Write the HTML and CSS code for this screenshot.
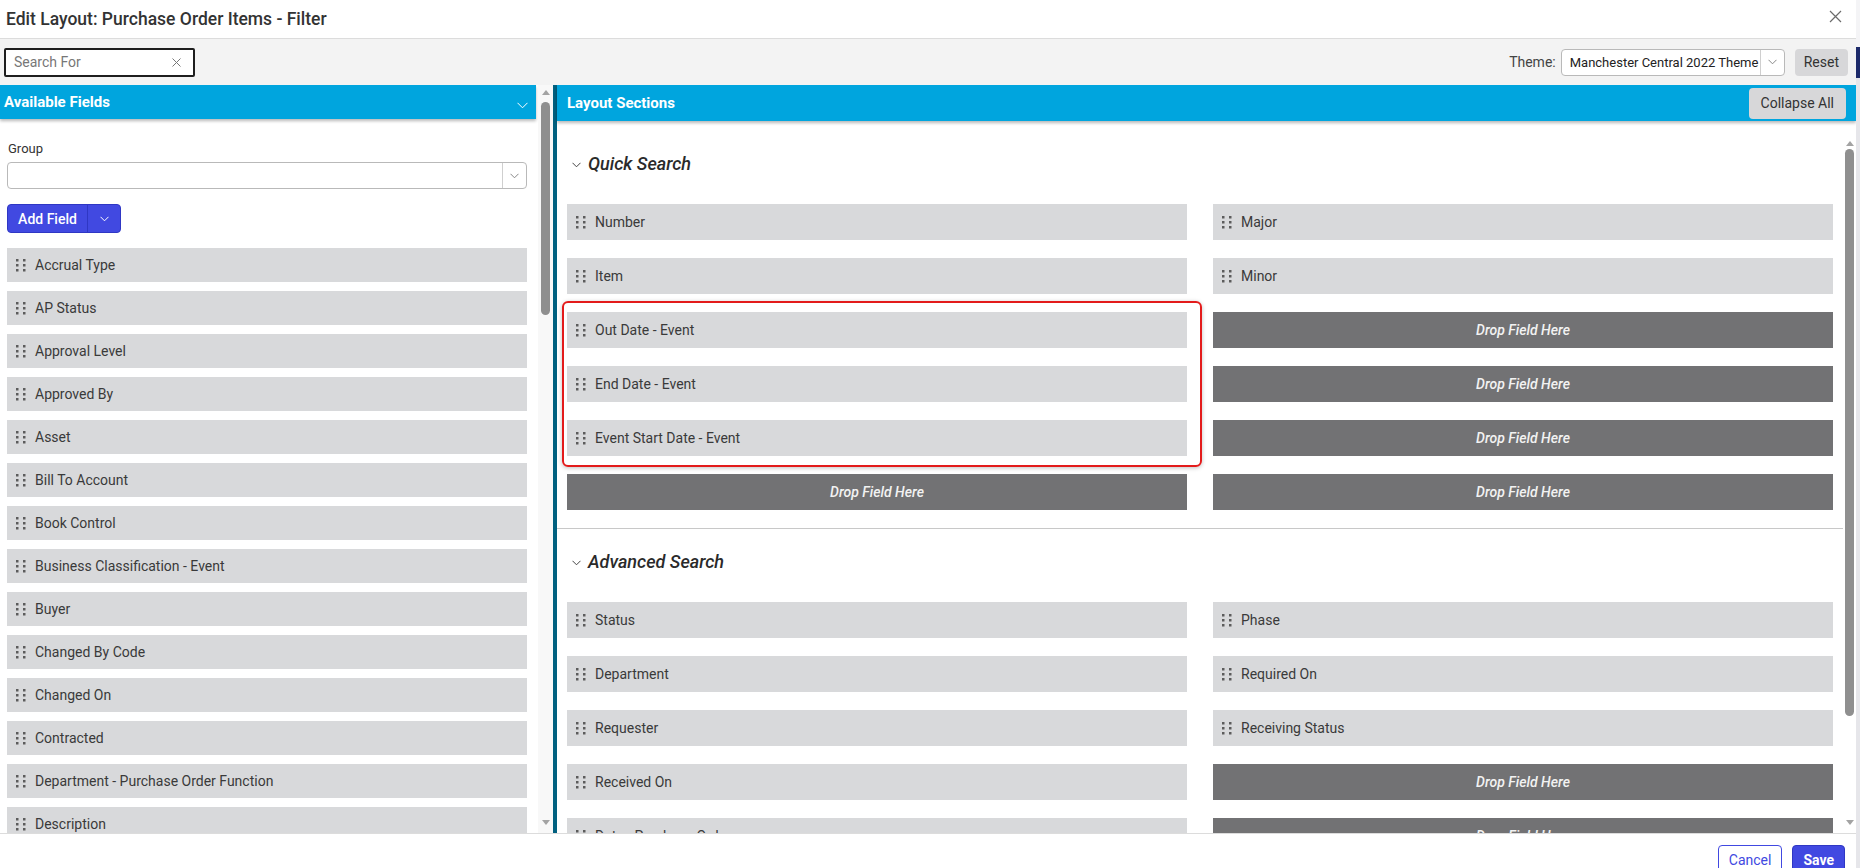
FILE: index.html
```html
<!DOCTYPE html>
<html lang="en">
<head>
    <meta charset="UTF-8">
    <meta name="viewport" content="width=device-width, initial-scale=1.0">
    <link rel="stylesheet" href="styles.css">
    <title>Edit Layout</title>
</head>
<body>
    <div class="modal">
        <header class="modal-head">
            <h1>Edit Layout: Purchase Order Items - Filter</h1>
            <button class="close-btn" title="Close">
                <svg width="13" height="13" viewBox="0 0 13 13"><path d="M1 1l11 11M12 1L1 12" stroke="#6b6b6b" stroke-width="1.2" fill="none"/></svg>
            </button>
        </header>

        <div class="toolbar">
            <div class="search-box">
                <span class="placeholder">Search For</span>
                <svg width="9" height="9" viewBox="0 0 9 9"><path d="M.5.5l8 8M8.5.5l-8 8" stroke="#777" stroke-width="1" fill="none"/></svg>
            </div>
            <div class="theme-picker">
                <label>Theme:</label>
                <div class="select theme-select">
                    <span class="select-value">Manchester Central 2022 Theme</span>
                    <span class="select-caret">
                        <svg width="9" height="6" viewBox="0 0 9 6"><path d="M.5.8l4 4 4-4" stroke="#888" stroke-width="1" fill="none"/></svg>
                    </span>
                </div>
                <button class="btn btn-gray">Reset</button>
            </div>
        </div>

        <div class="workspace">
            <!-- left: fields that can be dragged into the layout -->
            <aside class="fields-panel">
                <div class="fields-main">
                    <div class="panel-head fields-head">
                        <span>Available Fields</span>
                        <svg width="11" height="7" viewBox="0 0 11 7"><path d="M.5.8l5 5 5-5" stroke="#fff" stroke-width="1" fill="none"/></svg>
                    </div>
                    <div class="fields-body">
                        <label class="field-label">Group</label>
                        <div class="select group-select">
                            <span class="select-value"></span>
                            <span class="select-caret">
                                <svg width="9" height="6" viewBox="0 0 9 6"><path d="M.5.8l4 4 4-4" stroke="#888" stroke-width="1" fill="none"/></svg>
                            </span>
                        </div>
                        <div class="split-btn">
                            <span class="split-main">Add Field</span>
                            <span class="split-caret">
                                <svg width="9" height="6" viewBox="0 0 9 6"><path d="M.5.8l4 4 4-4" stroke="#fff" stroke-width="1" fill="none"/></svg>
                            </span>
                        </div>
                        <ul class="field-list">
                            <li class="field"><svg class="grip" viewBox="0 0 10 13"><path d="M0 0h2.5v2.5H0zM7 0h2.5v2.5H7zM0 5h2.5v2.5H0zM7 5h2.5v2.5H7zM0 10h2.5v2.5H0zM7 10h2.5v2.5H7z"/></svg>Accrual Type</li>
                            <li class="field"><svg class="grip" viewBox="0 0 10 13"><path d="M0 0h2.5v2.5H0zM7 0h2.5v2.5H7zM0 5h2.5v2.5H0zM7 5h2.5v2.5H7zM0 10h2.5v2.5H0zM7 10h2.5v2.5H7z"/></svg>AP Status</li>
                            <li class="field"><svg class="grip" viewBox="0 0 10 13"><path d="M0 0h2.5v2.5H0zM7 0h2.5v2.5H7zM0 5h2.5v2.5H0zM7 5h2.5v2.5H7zM0 10h2.5v2.5H0zM7 10h2.5v2.5H7z"/></svg>Approval Level</li>
                            <li class="field"><svg class="grip" viewBox="0 0 10 13"><path d="M0 0h2.5v2.5H0zM7 0h2.5v2.5H7zM0 5h2.5v2.5H0zM7 5h2.5v2.5H7zM0 10h2.5v2.5H0zM7 10h2.5v2.5H7z"/></svg>Approved By</li>
                            <li class="field"><svg class="grip" viewBox="0 0 10 13"><path d="M0 0h2.5v2.5H0zM7 0h2.5v2.5H7zM0 5h2.5v2.5H0zM7 5h2.5v2.5H7zM0 10h2.5v2.5H0zM7 10h2.5v2.5H7z"/></svg>Asset</li>
                            <li class="field"><svg class="grip" viewBox="0 0 10 13"><path d="M0 0h2.5v2.5H0zM7 0h2.5v2.5H7zM0 5h2.5v2.5H0zM7 5h2.5v2.5H7zM0 10h2.5v2.5H0zM7 10h2.5v2.5H7z"/></svg>Bill To Account</li>
                            <li class="field"><svg class="grip" viewBox="0 0 10 13"><path d="M0 0h2.5v2.5H0zM7 0h2.5v2.5H7zM0 5h2.5v2.5H0zM7 5h2.5v2.5H7zM0 10h2.5v2.5H0zM7 10h2.5v2.5H7z"/></svg>Book Control</li>
                            <li class="field"><svg class="grip" viewBox="0 0 10 13"><path d="M0 0h2.5v2.5H0zM7 0h2.5v2.5H7zM0 5h2.5v2.5H0zM7 5h2.5v2.5H7zM0 10h2.5v2.5H0zM7 10h2.5v2.5H7z"/></svg>Business Classification - Event</li>
                            <li class="field"><svg class="grip" viewBox="0 0 10 13"><path d="M0 0h2.5v2.5H0zM7 0h2.5v2.5H7zM0 5h2.5v2.5H0zM7 5h2.5v2.5H7zM0 10h2.5v2.5H0zM7 10h2.5v2.5H7z"/></svg>Buyer</li>
                            <li class="field"><svg class="grip" viewBox="0 0 10 13"><path d="M0 0h2.5v2.5H0zM7 0h2.5v2.5H7zM0 5h2.5v2.5H0zM7 5h2.5v2.5H7zM0 10h2.5v2.5H0zM7 10h2.5v2.5H7z"/></svg>Changed By Code</li>
                            <li class="field"><svg class="grip" viewBox="0 0 10 13"><path d="M0 0h2.5v2.5H0zM7 0h2.5v2.5H7zM0 5h2.5v2.5H0zM7 5h2.5v2.5H7zM0 10h2.5v2.5H0zM7 10h2.5v2.5H7z"/></svg>Changed On</li>
                            <li class="field"><svg class="grip" viewBox="0 0 10 13"><path d="M0 0h2.5v2.5H0zM7 0h2.5v2.5H7zM0 5h2.5v2.5H0zM7 5h2.5v2.5H7zM0 10h2.5v2.5H0zM7 10h2.5v2.5H7z"/></svg>Contracted</li>
                            <li class="field"><svg class="grip" viewBox="0 0 10 13"><path d="M0 0h2.5v2.5H0zM7 0h2.5v2.5H7zM0 5h2.5v2.5H0zM7 5h2.5v2.5H7zM0 10h2.5v2.5H0zM7 10h2.5v2.5H7z"/></svg>Department - Purchase Order Function</li>
                            <li class="field"><svg class="grip" viewBox="0 0 10 13"><path d="M0 0h2.5v2.5H0zM7 0h2.5v2.5H7zM0 5h2.5v2.5H0zM7 5h2.5v2.5H7zM0 10h2.5v2.5H0zM7 10h2.5v2.5H7z"/></svg>Description</li>
                        </ul>
                    </div>
                </div>
                <div class="scrollbar fields-scroll">
                    <span class="arrow-up"></span>
                    <span class="thumb"></span>
                    <span class="arrow-down"></span>
                </div>
            </aside>

            <div class="divider"></div>

            <!-- right: the sections of the filter layout -->
            <section class="layout-panel">
                <div class="panel-head layout-head">
                    <span>Layout Sections</span>
                    <button class="btn btn-gray collapse-btn">Collapse All</button>
                </div>
                <div class="layout-body">
                    <div class="layout-main">
                        <div class="layout-section first">
                            <div class="section-title">
                                <svg width="9" height="6" viewBox="0 0 9 6"><path d="M.5.8l4 4 4-4" stroke="#444" stroke-width="1" fill="none"/></svg>
                                <span>Quick Search</span>
                            </div>
                            <div class="section-grid">
                                <div class="field"><svg class="grip" viewBox="0 0 10 13"><path d="M0 0h2.5v2.5H0zM7 0h2.5v2.5H7zM0 5h2.5v2.5H0zM7 5h2.5v2.5H7zM0 10h2.5v2.5H0zM7 10h2.5v2.5H7z"/></svg>Number</div>
                                <div class="field"><svg class="grip" viewBox="0 0 10 13"><path d="M0 0h2.5v2.5H0zM7 0h2.5v2.5H7zM0 5h2.5v2.5H0zM7 5h2.5v2.5H7zM0 10h2.5v2.5H0zM7 10h2.5v2.5H7z"/></svg>Major</div>
                                <div class="field"><svg class="grip" viewBox="0 0 10 13"><path d="M0 0h2.5v2.5H0zM7 0h2.5v2.5H7zM0 5h2.5v2.5H0zM7 5h2.5v2.5H7zM0 10h2.5v2.5H0zM7 10h2.5v2.5H7z"/></svg>Item</div>
                                <div class="field"><svg class="grip" viewBox="0 0 10 13"><path d="M0 0h2.5v2.5H0zM7 0h2.5v2.5H7zM0 5h2.5v2.5H0zM7 5h2.5v2.5H7zM0 10h2.5v2.5H0zM7 10h2.5v2.5H7z"/></svg>Minor</div>
                                <div class="field"><svg class="grip" viewBox="0 0 10 13"><path d="M0 0h2.5v2.5H0zM7 0h2.5v2.5H7zM0 5h2.5v2.5H0zM7 5h2.5v2.5H7zM0 10h2.5v2.5H0zM7 10h2.5v2.5H7z"/></svg>Out Date - Event</div>
                                <div class="drop">Drop Field Here</div>
                                <div class="field"><svg class="grip" viewBox="0 0 10 13"><path d="M0 0h2.5v2.5H0zM7 0h2.5v2.5H7zM0 5h2.5v2.5H0zM7 5h2.5v2.5H7zM0 10h2.5v2.5H0zM7 10h2.5v2.5H7z"/></svg>End Date - Event</div>
                                <div class="drop">Drop Field Here</div>
                                <div class="field"><svg class="grip" viewBox="0 0 10 13"><path d="M0 0h2.5v2.5H0zM7 0h2.5v2.5H7zM0 5h2.5v2.5H0zM7 5h2.5v2.5H7zM0 10h2.5v2.5H0zM7 10h2.5v2.5H7z"/></svg>Event Start Date - Event</div>
                                <div class="drop">Drop Field Here</div>
                                <div class="drop">Drop Field Here</div>
                                <div class="drop">Drop Field Here</div>
                                <div class="highlight"></div>
                            </div>
                        </div>

                        <div class="layout-section">
                            <div class="section-title">
                                <svg width="9" height="6" viewBox="0 0 9 6"><path d="M.5.8l4 4 4-4" stroke="#444" stroke-width="1" fill="none"/></svg>
                                <span>Advanced Search</span>
                            </div>
                            <div class="section-grid">
                                <div class="field"><svg class="grip" viewBox="0 0 10 13"><path d="M0 0h2.5v2.5H0zM7 0h2.5v2.5H7zM0 5h2.5v2.5H0zM7 5h2.5v2.5H7zM0 10h2.5v2.5H0zM7 10h2.5v2.5H7z"/></svg>Status</div>
                                <div class="field"><svg class="grip" viewBox="0 0 10 13"><path d="M0 0h2.5v2.5H0zM7 0h2.5v2.5H7zM0 5h2.5v2.5H0zM7 5h2.5v2.5H7zM0 10h2.5v2.5H0zM7 10h2.5v2.5H7z"/></svg>Phase</div>
                                <div class="field"><svg class="grip" viewBox="0 0 10 13"><path d="M0 0h2.5v2.5H0zM7 0h2.5v2.5H7zM0 5h2.5v2.5H0zM7 5h2.5v2.5H7zM0 10h2.5v2.5H0zM7 10h2.5v2.5H7z"/></svg>Department</div>
                                <div class="field"><svg class="grip" viewBox="0 0 10 13"><path d="M0 0h2.5v2.5H0zM7 0h2.5v2.5H7zM0 5h2.5v2.5H0zM7 5h2.5v2.5H7zM0 10h2.5v2.5H0zM7 10h2.5v2.5H7z"/></svg>Required On</div>
                                <div class="field"><svg class="grip" viewBox="0 0 10 13"><path d="M0 0h2.5v2.5H0zM7 0h2.5v2.5H7zM0 5h2.5v2.5H0zM7 5h2.5v2.5H7zM0 10h2.5v2.5H0zM7 10h2.5v2.5H7z"/></svg>Requester</div>
                                <div class="field"><svg class="grip" viewBox="0 0 10 13"><path d="M0 0h2.5v2.5H0zM7 0h2.5v2.5H7zM0 5h2.5v2.5H0zM7 5h2.5v2.5H7zM0 10h2.5v2.5H0zM7 10h2.5v2.5H7z"/></svg>Receiving Status</div>
                                <div class="field"><svg class="grip" viewBox="0 0 10 13"><path d="M0 0h2.5v2.5H0zM7 0h2.5v2.5H7zM0 5h2.5v2.5H0zM7 5h2.5v2.5H7zM0 10h2.5v2.5H0zM7 10h2.5v2.5H7z"/></svg>Received On</div>
                                <div class="drop">Drop Field Here</div>
                                <div class="field"><svg class="grip" viewBox="0 0 10 13"><path d="M0 0h2.5v2.5H0zM7 0h2.5v2.5H7zM0 5h2.5v2.5H0zM7 5h2.5v2.5H7zM0 10h2.5v2.5H0zM7 10h2.5v2.5H7z"/></svg>Date - Purchase Order</div>
                                <div class="drop">Drop Field Here</div>
                            </div>
                        </div>
                    </div>
                    <div class="scrollbar layout-scroll">
                        <span class="arrow-up"></span>
                        <span class="thumb"></span>
                        <span class="arrow-down"></span>
                    </div>
                </div>
            </section>
        </div>

        <footer class="modal-foot">
            <button class="btn btn-outline">Cancel</button>
            <button class="btn btn-primary">Save</button>
        </footer>
    </div>
</body>
</html>
```

FILE: styles.css
```css
body {
    margin: 0;
    height: 868px;
    overflow: hidden;
    /* page behind the dialog, seen along its right edge */
    background: linear-gradient(#f4f4f6 0 47px, #1d2a6a 47px 78px, #e6e6ea 78px);
    font-family: Roboto, "Liberation Sans", sans-serif;
    color: #333;
}

.modal {
    width: 1856px;
    height: 900px;
    background: #fff;
    display: flex;
    flex-direction: column;
}

/* title bar */
.modal-head {
    height: 38px;
    flex: none;
    border-bottom: 1px solid #dcdcdc;
    display: flex;
    align-items: center;
    justify-content: space-between;
    padding: 0 14px 0 6px;
}

.modal-head h1 {
    margin: 0;
    font-size: 17.5px;
    font-weight: 500;
    color: #333;
}

.close-btn {
    border: none;
    background: none;
    padding: 0;
    display: flex;
    margin-top: -6px;
}

/* search + theme row */
.toolbar {
    height: 46px;
    flex: none;
    background: #f3f3f3;
    display: flex;
    align-items: center;
    justify-content: space-between;
    padding: 0 8px 0 4px;
}

.search-box {
    width: 167px;
    height: 25px;
    border: 2px solid #1e1e1e;
    border-radius: 2px;
    background: #fff;
    display: flex;
    align-items: center;
    justify-content: space-between;
    padding: 0 12px 0 8px;
    box-sizing: content-box;
}

.search-box .placeholder {
    font-size: 14px;
    color: #777;
}

.theme-picker {
    display: flex;
    align-items: center;
}

.theme-picker label {
    font-size: 14px;
    color: #444;
    margin-right: 5px;
}

.select {
    display: flex;
    height: 25px;
    border: 1px solid #b9b9b9;
    border-radius: 4px;
    background: #fff;
}

.select-value {
    flex: 1;
    display: flex;
    align-items: center;
    padding-left: 8px;
    font-size: 13px;
    white-space: nowrap;
    overflow: hidden;
    color: #222;
}

.select-caret {
    width: 23px;
    flex: none;
    border-left: 1px solid #cfcfcf;
    display: flex;
    align-items: center;
    justify-content: center;
}

.theme-select {
    width: 222px;
    margin-right: 10px;
}

.btn {
    font-family: inherit;
    font-size: 14px;
    border-radius: 4px;
    cursor: pointer;
}

.btn-gray {
    height: 27px;
    padding: 0 9px;
    border: none;
    background: #d7d7d9;
    color: #333;
}

/* main area */
.workspace {
    height: 748px;
    flex: none;
    display: flex;
    overflow: hidden;
}

.fields-panel {
    width: 553px;
    flex: none;
    display: flex;
}

.fields-main {
    flex: 1;
    overflow: hidden;
}

.panel-head {
    background: #00a5de;
    color: #fff;
    font-size: 15px;
    font-weight: 700;
    display: flex;
    align-items: center;
    justify-content: space-between;
    box-shadow: 0 2px 3px rgba(0, 0, 0, 0.28);
    position: relative;
    z-index: 1;
}

.fields-head {
    height: 34px;
    padding: 0 8px 0 4px;
    margin-right: 2px;
}

.fields-head svg {
    margin-top: 6px;
}

.fields-body {
    padding: 22px 11px 0 7px;
}

.field-label {
    display: block;
    font-size: 13px;
    line-height: 16px;
    color: #333;
    margin-left: 1px;
}

.group-select {
    margin-top: 5px;
    height: 25px;
}

.split-btn {
    margin-top: 15px;
    width: 112px;
    height: 27px;
    display: flex;
    border: 1px solid #2f37c4;
    border-radius: 4px;
    background: #4149e1;
    color: #fff;
}

.split-main {
    width: 79px;
    display: flex;
    align-items: center;
    justify-content: center;
    font-size: 14px;
    font-weight: 500;
    border-right: 1px solid #2f37c4;
}

.split-caret {
    flex: 1;
    display: flex;
    align-items: center;
    justify-content: center;
}

.field-list {
    list-style: none;
    margin: 15px 0 0;
    padding: 0;
}

.field {
    height: 34px;
    margin-bottom: 9px;
    background: #d8d9db;
    display: flex;
    align-items: center;
    padding-left: 9px;
    font-size: 14px;
    color: #3a3a3a;
}

.grip {
    width: 10px;
    height: 13px;
    fill: #5c5c5c;
    margin-right: 9px;
    flex: none;
}

/* fake scrollbars drawn in the page chrome */
.scrollbar {
    flex: none;
    display: flex;
    flex-direction: column;
    align-items: center;
    background: #f8f8f8;
}

.fields-scroll {
    width: 15px;
    padding: 5px 0 8px;
}

.arrow-up,
.arrow-down {
    width: 0;
    height: 0;
    border-left: 4px solid transparent;
    border-right: 4px solid transparent;
}

.arrow-up {
    border-bottom: 5px solid #a3a3a3;
}

.arrow-down {
    border-top: 5px solid #a3a3a3;
    margin-top: auto;
}

.thumb {
    width: 9px;
    border-radius: 5px;
    background: #8f8f8f;
}

.fields-scroll .thumb {
    margin-top: 7px;
    height: 213px;
}

.divider {
    width: 4px;
    flex: none;
    background: #00607f;
}

.layout-panel {
    flex: 1;
    display: flex;
    flex-direction: column;
    min-width: 0;
}

.layout-head {
    height: 36px;
    flex: none;
    padding: 0 10px 0 10px;
}

.collapse-btn {
    height: 31px;
    padding: 0 12px;
    font-weight: 400;
}

.layout-body {
    flex: 1;
    display: flex;
    overflow: hidden;
}

.layout-main {
    flex: 1;
    overflow: hidden;
    padding: 0 10px;
}

.layout-scroll {
    width: 13px;
    background: #fff;
    padding: 20px 0 8px;
}

.layout-scroll .thumb {
    margin-top: 3px;
    height: 567px;
}

.layout-section {
    border-bottom: 1px solid #c8c8c8;
    margin: 0 -10px;
    padding: 0 10px 18px;
}

.layout-section.first {
    margin-top: 10px;
}

.section-title {
    height: 64px;
    display: flex;
    align-items: center;
    padding-left: 5px;
    font-size: 18px;
    font-weight: 500;
    font-style: italic;
    color: #2a2a2a;
}

.section-title svg {
    margin: 4px 7px 0 0;
}

.section-grid {
    display: grid;
    grid-template-columns: 1fr 1fr;
    column-gap: 26px;
    row-gap: 18px;
    padding-top: 9px;
    position: relative;
}

.section-grid .field {
    height: 36px;
    margin: 0;
}

.drop {
    height: 36px;
    background: #727274;
    color: #f2f2f2;
    font-size: 14px;
    font-style: italic;
    font-weight: 500;
    display: flex;
    align-items: center;
    justify-content: center;
}

/* red outline round the event date fields */
.highlight {
    position: absolute;
    top: 106px;
    left: -5px;
    width: 636px;
    height: 162px;
    border: 2px solid #e31b1b;
    border-radius: 6px;
    box-shadow: 0 1px 4px rgba(0, 0, 0, 0.25);
    pointer-events: none;
}

/* dialog buttons */
.modal-foot {
    flex: none;
    border-top: 1px solid #dcdcdc;
    display: flex;
    justify-content: flex-end;
    gap: 10px;
    padding: 11px 11px 0;
}

.btn-outline,
.btn-primary {
    height: 30px;
    padding: 0 10px;
}

.btn-outline {
    border: 1px solid #4149e1;
    background: #fff;
    color: #4149e1;
}

.btn-primary {
    border: 1px solid #2f37c4;
    background: #4149e1;
    color: #fff;
    font-weight: 700;
}
```
